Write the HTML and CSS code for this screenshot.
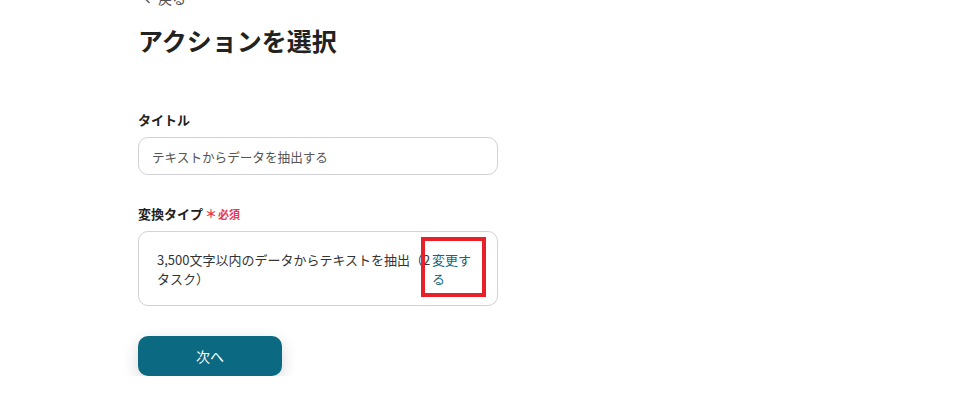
FILE: index.html
```html
<!DOCTYPE html>
<html lang="ja">
<head>
<meta charset="utf-8">
<title>アクションを選択</title>
<link rel="stylesheet" href="styles.css">
</head>
<body>
<div class="page">
  <a class="back" href="#"><svg class="chev" width="8" height="12" viewBox="0 0 8 12"><path d="M6.5 1 L1.5 6 L6.5 11" fill="none" stroke="#666" stroke-width="1.6"/></svg><span>戻る</span></a>
  <h1 class="title">アクションを選択</h1>

  <div class="field">
    <label class="label">タイトル</label>
    <input class="input" type="text" value="テキストからデータを抽出する">
  </div>

  <div class="field field-type">
    <label class="label">変換タイプ<span class="req"><span class="star">＊</span>必須</span></label>
    <div class="select-box">
      <div class="select-text">3,500文字以内のデータからテキストを抽出（2タスク）</div>
      <a class="change" href="#">変更する</a>
      <div class="highlight"></div>
    </div>
  </div>

  <button class="next" type="button">次へ</button>
</div>
</body>
</html>
```
FILE: styles.css
```css
* { box-sizing: border-box; }
body {
  margin: 0;
  font-family: "Noto Sans CJK JP", "Noto Sans", sans-serif;
  color: #222;
  background: #fff;
}
.page {
  display: flex;
  flex-direction: column;
  align-items: flex-start;
  padding-left: 138px;
  margin-top: -12px;
}
.back {
  display: flex;
  align-items: center;
  gap: 7px;
  padding-left: 5px;
  font-size: 14px;
  line-height: 20px;
  color: #555;
  text-decoration: none;
}
.title {
  margin: 14px 0 0;
  font-size: 25px;
  line-height: 36px;
  font-weight: 700;
  color: #222;
}
.field {
  display: flex;
  flex-direction: column;
  gap: 7px;
  margin-top: 52px;
}
.field-type { margin-top: 29px; }
.label {
  font-size: 13px;
  line-height: 20px;
  font-weight: 700;
  color: #222;
  display: flex;
  align-items: center;
}
.req {
  color: #e8384f;
  font-size: 11px;
  font-weight: 700;
  margin-left: 2px;
  display: flex;
  align-items: center;
}
.star { font-size: 12px; margin-right: 1px; }
.input {
  width: 360px;
  height: 38px;
  border: 1px solid #d2d2d6;
  border-radius: 10px;
  padding: 0 13px;
  font-family: inherit;
  font-size: 12.6px;
  color: #555;
  background: #fff;
  outline: none;
}
.select-box {
  position: relative;
  width: 360px;
  height: 75px;
  border: 1px solid #d2d2d6;
  border-radius: 10px;
  padding: 0 18px;
  display: flex;
  align-items: center;
  font-size: 13px;
  line-height: 19px;
}
.select-text {
  flex: 1;
  color: #333;
}
.change {
  width: 47px;
  flex: none;
  color: #0b6a82;
  text-decoration: none;
}
.highlight {
  position: absolute;
  left: 282px;
  top: 5px;
  width: 65px;
  height: 60px;
  border: 4px solid #e8202a;
}
.next {
  margin-top: 30px;
  width: 144px;
  height: 40px;
  border: none;
  border-radius: 10px;
  background: #0b6a82;
  color: #fff;
  font-family: inherit;
  font-size: 14px;
  box-shadow: 0 5px 16px rgba(0, 0, 0, 0.16);
}
```
